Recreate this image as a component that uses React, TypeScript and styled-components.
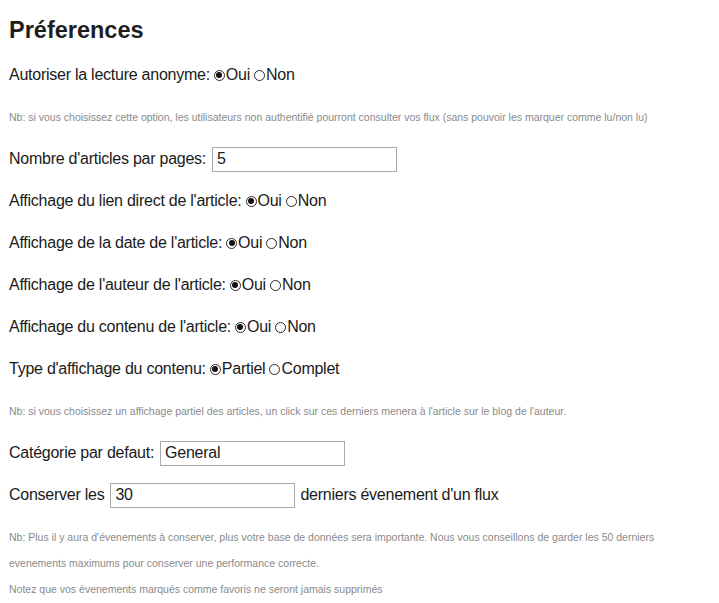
import React from 'react';
import styled, {createGlobalStyle} from 'styled-components';

const GlobalStyle = createGlobalStyle`
  body {
    margin: 0;
    background: #fff;
    font-family: "Liberation Sans", Arial, sans-serif;
    color: #222;
  }
`

const Page = styled.div`
  padding: 0 9px;
`

const Title = styled.h1`
  font-size: 23.5px;
  font-weight: bold;
  line-height: 26px;
  margin: 17px 0 11px;
  color: #1e1e1e;
`

const Row = styled.div`
  display: flex;
  align-items: center;
  height: 42px;
  font-size: 16px;
  letter-spacing: -0.25px;
  white-space: pre;
  color: #1a1a1a;
`

const Note = styled.div`
  display: flex;
  align-items: center;
  height: 42px;
  font-size: 10.5px;
  color: #8a8a8a;
  white-space: nowrap;
`

const LongNote = styled.div`
  padding-top: 8px;
  font-size: 10.5px;
  line-height: 26px;
  color: #8a8a8a;
  white-space: nowrap;
`

const Option = styled.span<{ $gap?: boolean }>`
  display: inline-flex;
  align-items: center;
  margin-left: ${p => (p.$gap ? '4px' : '0')};
`

const Radio = styled.span<{ $checked?: boolean }>`
  position: relative;
  display: inline-block;
  width: 11px;
  height: 11px;
  box-sizing: border-box;
  border: 1px solid #2a2a2a;
  border-radius: 50%;
  background: #fff;
  margin-right: 1px;

  &::after {
    content: '';
    display: ${p => (p.$checked ? 'block' : 'none')};
    position: absolute;
    left: 1.5px;
    top: 1.5px;
    width: 6px;
    height: 6px;
    border-radius: 50%;
    background: #111;
  }
`

const TextInput = styled.input`
  width: 185px;
  height: 25px;
  box-sizing: border-box;
  border: 1px solid #a9a9a9;
  padding: 0 4px;
  margin: 0 5px 0 6px;
  font-family: "Liberation Sans", Arial, sans-serif;
  font-size: 16px;
  letter-spacing: -0.25px;
  color: #1a1a1a;
  outline: none;
`

interface ChoiceProps {
  label: string;
  options: string[];
  selected: number;
}

const Choice: React.FC<ChoiceProps> = ({label, options, selected}) => (
  <Row>
    {label}
    {options.map((o, i) => (
      <Option key={o} $gap>
        <Radio $checked={i === selected} />
        {o}
      </Option>
    ))}
  </Row>
)

export default function App() {
  return (
    <Page>
      <GlobalStyle />
      <Title>Préferences</Title>
      <Choice label="Autoriser la lecture anonyme:" options={['Oui', 'Non']} selected={0} />
      <Note>Nb: si vous choisissez cette option, les utilisateurs non authentifié pourront consulter vos flux (sans pouvoir les marquer comme lu/non lu)</Note>
      <Row>
        Nombre d'articles par pages:
        <TextInput defaultValue="5" />
      </Row>
      <Choice label="Affichage du lien direct de l'article:" options={['Oui', 'Non']} selected={0} />
      <Choice label="Affichage de la date de l'article:" options={['Oui', 'Non']} selected={0} />
      <Choice label="Affichage de l'auteur de l'article:" options={['Oui', 'Non']} selected={0} />
      <Choice label="Affichage du contenu de l'article:" options={['Oui', 'Non']} selected={0} />
      <Choice label="Type d'affichage du contenu:" options={['Partiel', 'Complet']} selected={0} />
      <Note>Nb: si vous choisissez un affichage partiel des articles, un click sur ces derniers menera à l'article sur le blog de l'auteur.</Note>
      <Row>
        Catégorie par defaut:
        <TextInput defaultValue="General" />
      </Row>
      <Row>
        Conserver les
        <TextInput defaultValue="30" />
        derniers évenement d'un flux
      </Row>
      <LongNote>
        Nb: Plus il y aura d'évenements à conserver, plus votre base de données sera importante. Nous vous conseillons de garder les 50 derniers
        <br />
        evenements maximums pour conserver une performance correcte.
        <br />
        Notez que vos évenements marqués comme favoris ne seront jamais supprimés
      </LongNote>
    </Page>
  );
}
